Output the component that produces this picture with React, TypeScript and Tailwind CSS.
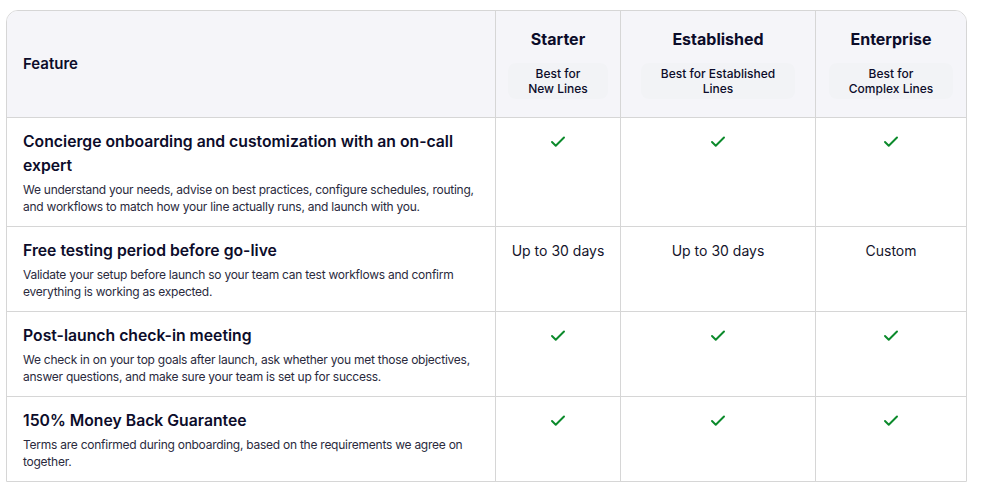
import { Check } from "lucide-react";

type Cell = "check" | string;

interface Row {
  title: string;
  desc: string;
  values: [Cell, Cell, Cell];
}

const plans = [
  { name: "Starter", sub: ["Best for", "New Lines"] },
  { name: "Established", sub: ["Best for Established", "Lines"] },
  { name: "Enterprise", sub: ["Best for", "Complex Lines"] },
];

const rows: Row[] = [
  {
    title: "Concierge onboarding and customization with an on-call expert",
    desc: "We understand your needs, advise on best practices, configure schedules, routing, and workflows to match how your line actually runs, and launch with you.",
    values: ["check", "check", "check"],
  },
  {
    title: "Free testing period before go-live",
    desc: "Validate your setup before launch so your team can test workflows and confirm everything is working as expected.",
    values: ["Up to 30 days", "Up to 30 days", "Custom"],
  },
  {
    title: "Post-launch check-in meeting",
    desc: "We check in on your top goals after launch, ask whether you met those objectives, answer questions, and make sure your team is set up for success.",
    values: ["check", "check", "check"],
  },
  {
    title: "150% Money Back Guarantee",
    desc: "Terms are confirmed during onboarding, based on the requirements we agree on together.",
    values: ["check", "check", "check"],
  },
];

function ValueCell({ value }: { value: Cell }) {
  return (
    <div className="border-l border-t border-[#d6d6d6] pt-3 flex justify-center">
      {value === "check" ? (
        <div className="h-6 flex items-center">
          <Check className="w-[18px] h-[18px] text-[#0b8a2b]" strokeWidth={2.6} />
        </div>
      ) : (
        <span className="text-[14px] leading-6 text-[#14142b]">{value}</span>
      )}
    </div>
  );
}

export default function App() {
  return (
    <div
      className="w-[995px] h-[485px] bg-white overflow-hidden pl-[6px] pt-[10px]"
      style={{ fontFamily: "Inter, 'Liberation Sans', sans-serif" }}
    >
      <div className="w-[961px] border border-[#d6d6d6] rounded-t-xl overflow-hidden">
        <div className="grid grid-cols-[488px_125px_195px_151px]">
          {/* Header */}
          <div className="bg-[#f5f5f9] h-[106px] flex items-center px-4">
            <span className="text-[15px] font-semibold text-[#0c0c2a]">Feature</span>
          </div>
          {plans.map((p) => (
            <div
              key={p.name}
              className="bg-[#f5f5f9] border-l border-[#d6d6d6] h-[106px] flex flex-col items-center pt-4"
            >
              <span className="text-[16px] leading-6 font-bold text-[#0c0c2a]">{p.name}</span>
              <div className="mt-3 px-5 py-[3px] rounded-lg bg-[#f2f3f6] text-center">
                {p.sub.map((s) => (
                  <div key={s} className="text-[12px] leading-[15px] font-medium text-[#0c0c2a]">
                    {s}
                  </div>
                ))}
              </div>
            </div>
          ))}

          {/* Body */}
          {rows.map((r) => (
            <div key={r.title} className="contents">
              <div className="border-t border-[#d6d6d6] px-4 pt-3 pb-[11px]">
                <div className="text-[15.75px] leading-6 font-semibold text-[#0c0c2a]">{r.title}</div>
                <p className="mt-1 text-[12px] leading-[16.5px] tracking-[-0.25px] text-[#2a2a3d]">
                  {r.desc}
                </p>
              </div>
              {r.values.map((v, i) => (
                <ValueCell key={i} value={v} />
              ))}
            </div>
          ))}
        </div>
      </div>
    </div>
  );
}
